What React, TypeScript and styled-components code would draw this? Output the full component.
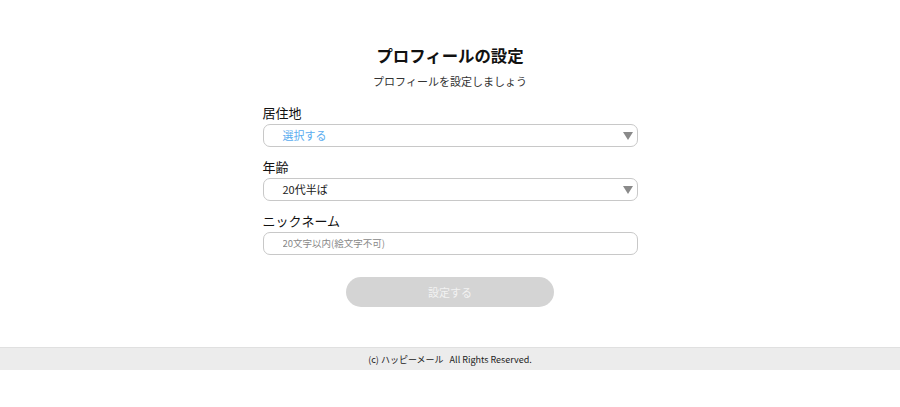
import React from "react";
import styled, { createGlobalStyle } from "styled-components";

const Global = createGlobalStyle`
  html, body { margin: 0; padding: 0; background: #fff; }
  body { font-family: "Noto Sans CJK JP", "Noto Sans", sans-serif; color: #222; }
  * { box-sizing: border-box; }
`;

const Page = styled.div`
  display: flex;
  flex-direction: column;
  min-height: 407px;
`;

const Main = styled.main`
  display: flex;
  flex-direction: column;
  align-items: center;
  padding-top: 42px;
  padding-bottom: 40px;
`;

const Title = styled.h1`
  margin: 0;
  font-size: 16.4px;
  line-height: 26px;
  font-weight: 700;
  color: #111;
`;

const Subtitle = styled.p`
  margin: 4px 0 0;
  font-size: 11px;
  line-height: 18px;
  color: #333;
`;

const Form = styled.form`
  width: 375px;
  margin-top: 13px;
  display: flex;
  flex-direction: column;
`;

const Field = styled.div<{ $first?: boolean }>`
  display: flex;
  flex-direction: column;
  margin-top: ${(p) => (p.$first ? 0 : 10)}px;
`;

const Label = styled.label`
  font-size: 13px;
  line-height: 20px;
  color: #111;
  margin-bottom: 1px;
`;

const SelectBox = styled.div<{ $placeholder?: boolean }>`
  position: relative;
  height: 23px;
  border: 1px solid #c8c8c8;
  border-radius: 7px;
  display: flex;
  align-items: center;
  padding: 0 0 2px 19px;
  font-size: 11px;
  color: ${(p) => (p.$placeholder ? "#5aacef" : "#222")};
`;

const Arrow = styled.span`
  position: absolute;
  right: 4px;
  top: 7px;
  width: 0;
  height: 0;
  border-left: 5px solid transparent;
  border-right: 5px solid transparent;
  border-top: 8px solid #8a8a8a;
`;

const Input = styled.input`
  height: 23px;
  border: 1px solid #c8c8c8;
  border-radius: 7px;
  padding: 0 0 1px 19px;
  font-family: inherit;
  font-size: 9.5px;
  outline: none;
  &::placeholder { color: #888; }
`;

const Button = styled.button`
  align-self: center;
  margin-top: 22px;
  width: 208px;
  height: 30px;
  border: none;
  border-radius: 15px;
  background: #d4d4d4;
  color: #f2f2f2;
  font-family: inherit;
  font-size: 11px;
`;

const Footer = styled.footer`
  height: 23px;
  background: #ececec;
  border-top: 1px solid #e0e0e0;
  display: flex;
  align-items: center;
  justify-content: center;
  font-size: 9px;
  color: #222;
  white-space: pre;
`;

export default function App() {
  return (
    <Page>
      <Global />
      <Main>
        <Title>プロフィールの設定</Title>
        <Subtitle>プロフィールを設定しましょう</Subtitle>
        <Form onSubmit={(e) => e.preventDefault()}>
          <Field $first>
            <Label>居住地</Label>
            <SelectBox $placeholder>
              選択する
              <Arrow />
            </SelectBox>
          </Field>
          <Field>
            <Label>年齢</Label>
            <SelectBox>
              20代半ば
              <Arrow />
            </SelectBox>
          </Field>
          <Field>
            <Label>ニックネーム</Label>
            <Input placeholder="20文字以内(絵文字不可)" />
          </Field>
          <Button type="button">設定する</Button>
        </Form>
      </Main>
      <Footer>(c) ハッピーメール   All Rights Reserved.</Footer>
    </Page>
  );
}
